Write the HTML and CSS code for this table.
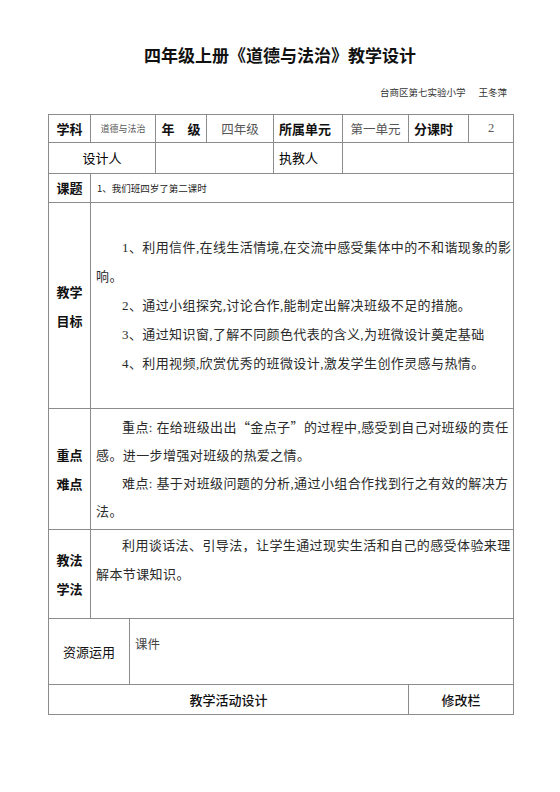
FILE: index.html
```html
<!DOCTYPE html>
<html lang="zh-CN">
<head>
<meta charset="utf-8">
<title>四年级上册《道德与法治》教学设计</title>
<link rel="stylesheet" href="styles.css">
</head>
<body>
<div class="page">
  <h1 class="title">四年级上册《道德与法治》教学设计</h1>
  <p class="author">台商区第七实验小学<span class="gap"></span>王冬萍</p>
  <table class="plan">
    <colgroup>
      <col class="c1"><col class="c2"><col class="c3"><col class="c4"><col class="c5"><col class="c6"><col class="c7"><col class="c8"><col class="c9">
    </colgroup>
    <tr class="r-info">
      <th class="lbl">学科</th>
      <td colspan="2" class="val tiny">道德与法治</td>
      <th class="lbl">年　级</th>
      <td class="val">四年级</td>
      <th class="lbl left">所属单元</th>
      <td class="val">第一单元</td>
      <th class="lbl left">分课时</th>
      <td class="val">2</td>
    </tr>
    <tr class="r-people">
      <th colspan="3" class="lbl plain">设计人</th>
      <td colspan="2"></td>
      <th class="lbl left plain">执教人</th>
      <td colspan="3"></td>
    </tr>
    <tr class="r-topic">
      <th class="lbl">课题</th>
      <td colspan="8" class="topic">1、我们班四岁了第二课时</td>
    </tr>
    <tr class="r-goals">
      <th class="lbl stack">教学<br>目标</th>
      <td colspan="8" class="body">
        <p>1、利用信件,在线生活情境,在交流中感受集体中的不和谐现象的影<br>响。</p>
        <p>2、通过小组探究,讨论合作,能制定出解决班级不足的措施。</p>
        <p>3、通过知识窗,了解不同颜色代表的含义,为班微设计奠定基础</p>
        <p>4、利用视频,欣赏优秀的班微设计,激发学生创作灵感与热情。</p>
      </td>
    </tr>
    <tr class="r-keys">
      <th class="lbl stack">重点<br>难点</th>
      <td colspan="8" class="body">
        <p>重点: 在给班级出出<span class="q">“金点子”</span>的过程中,感受到自己对班级的责任<br>感。进一步增强对班级的热爱之情。</p>
        <p>难点: 基于对班级问题的分析,通过小组合作找到行之有效的解决方<br>法。</p>
      </td>
    </tr>
    <tr class="r-method">
      <th class="lbl stack">教法<br>学法</th>
      <td colspan="8" class="body top">
        <p>利用谈话法、引导法，让学生通过现实生活和自己的感受体验来理<br>解本节课知识。</p>
      </td>
    </tr>
    <tr class="r-res">
      <th colspan="2" class="lbl res">资源运用</th>
      <td colspan="7" class="res-val">课件</td>
    </tr>
    <tr class="r-act">
      <th colspan="7" class="lbl act">教学活动设计</th>
      <th colspan="2" class="lbl act">修改栏</th>
    </tr>
  </table>
</div>
</body>
</html>
```

FILE: styles.css
```css
html, body {
  margin: 0;
  padding: 0;
  background: #fff;
}

body {
  font-family: "Noto Sans CJK SC", "Noto Sans", sans-serif;
  color: #222;
}

.page {
  width: 560px;
  padding-top: 43px;
}

.title {
  margin: 0;
  text-align: center;
  font-size: 17px;
  line-height: 24px;
  font-weight: 700;
  color: #111;
}

.author {
  margin: 19px 0 0;
  padding-right: 53px;
  text-align: right;
  font-family: "Liberation Serif", "Noto Sans CJK SC", serif;
  font-size: 9.5px;
  line-height: 14px;
  color: #333;
}

.author .gap {
  display: inline-block;
  width: 13px;
}

.plan {
  margin: 14px 0 0 48px;
  width: 466px;
  table-layout: fixed;
  border-collapse: collapse;
}

.c1 { width: 42px; }
.c2 { width: 39px; }
.c3 { width: 26px; }
.c4 { width: 51px; }
.c5 { width: 67px; }
.c6 { width: 69px; }
.c7 { width: 66px; }
.c8 { width: 60px; }
.c9 { width: 45px; }

.plan th,
.plan td {
  border: 1px solid #8c8c8c;
  padding: 0;
  vertical-align: middle;
}

.plan .lbl {
  font-size: 13px;
  font-weight: 700;
  color: #111;
  text-align: center;
  line-height: 18px;
  white-space: nowrap;
}

.plan .lbl.left {
  text-align: left;
  padding-left: 5px;
}

.plan .lbl.plain {
  font-weight: 400;
  color: #000;
}

.plan .val {
  text-align: center;
  font-family: "Liberation Serif", "Noto Sans CJK SC", serif;
  font-size: 12.5px;
  color: #555;
}

.plan .val.tiny {
  font-size: 9px;
}

.r-info { height: 28px; }
.r-people { height: 31px; }
.r-topic { height: 29px; }
.r-goals { height: 206px; }
.r-keys { height: 121px; }
.r-method { height: 89px; }
.r-res { height: 66px; }
.r-act { height: 30px; }

.plan .topic {
  padding-left: 6px;
  font-size: 9.5px;
  color: #222;
}

.plan .lbl.stack {
  line-height: 29px;
}

.plan .body {
  padding: 2px 0 2px 5px;
  font-family: "Liberation Serif", "Noto Sans CJK SC", serif;
  font-size: 13px;
  letter-spacing: 0.4px;
  line-height: 29px;
  color: #2a2a2a;
  white-space: nowrap;
}

.plan .r-keys .body,
.r-keys .body {
  line-height: 28px;
}

.body p {
  margin: 0;
  text-indent: 2em;
}

.body .q {
  font-family: "Noto Sans CJK SC", sans-serif;
}

.plan .body.top {
  vertical-align: top;
  padding-top: 1px;
}

.plan .lbl.res {
  font-weight: 400;
  font-size: 13px;
  color: #111;
}

.plan .res-val {
  vertical-align: top;
  padding: 16px 5px 0;
  font-size: 12.5px;
  line-height: 18px;
  color: #444;
}

.plan .lbl.act {
  font-weight: 500;
  font-size: 13px;
}
```
